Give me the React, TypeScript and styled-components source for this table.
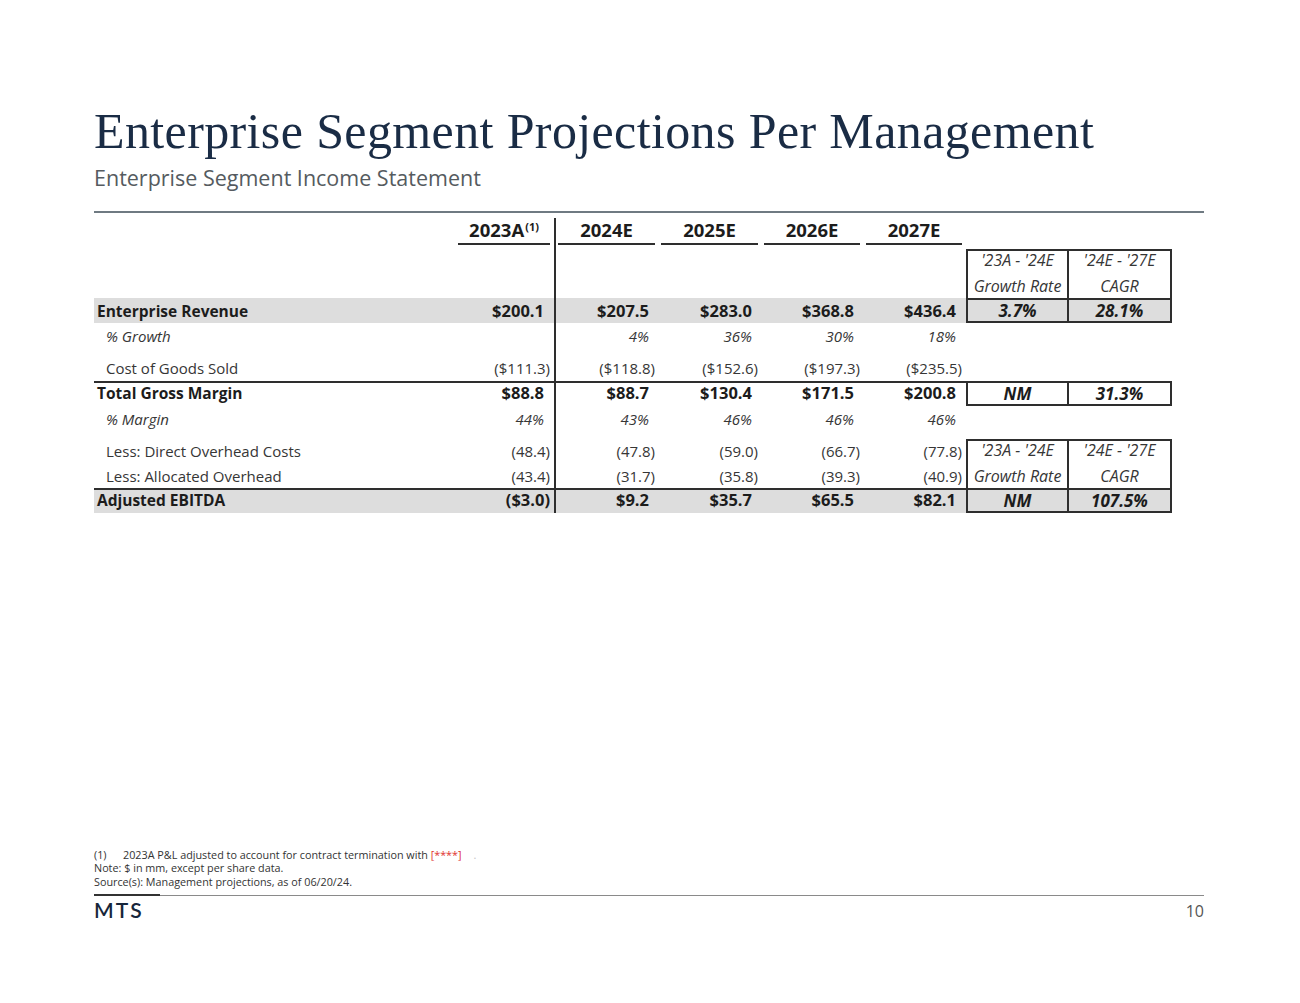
import React from 'react';
import styled, { createGlobalStyle, css } from 'styled-components';

const GlobalStyle = createGlobalStyle`
  html, body {
    margin: 0;
    padding: 0;
    background: #fff;
  }
  * {
    box-sizing: border-box;
  }
`;

const COLS = '362px 100px 103px 103px 102px 102px 103px 103px';
const LINE = '2px solid #2e2e2e';
const SHADE = '#dddddd';

const Page = styled.div`
  width: 1300px;
  height: 1003px;
  padding: 106px 96px 81px 94px;
  display: flex;
  flex-direction: column;
  font-family: 'Open Sans', 'Noto Sans', sans-serif;
  color: #333;
`;

const Title = styled.h1`
  margin: 0;
  font-family: 'Liberation Serif', 'Times New Roman', serif;
  font-weight: 400;
  font-size: 50px;
  line-height: 50px;
  letter-spacing: 0.38px;
  color: #1a2c45;
  white-space: nowrap;
`;

const Subtitle = styled.h2`
  margin: 10px 0 0;
  font-weight: 400;
  font-size: 21.5px;
  line-height: 24px;
  color: #555b60;
`;

const Rule = styled.div`
  margin-top: 21px;
  height: 2px;
  background: #6f7a82;
`;

const Table = styled.div`
  margin-top: 5px;
  display: flex;
  flex-direction: column;
`;

const Row = styled.div<{ $h: number }>`
  display: grid;
  grid-template-columns: ${COLS};
  grid-template-rows: ${(p) => p.$h}px;
  height: ${(p) => p.$h}px;
  font-size: 15px;
  line-height: 18px;
`;

const cellText = css<{ $kind: Kind; $shaded?: boolean; $rule?: boolean }>`
  display: flex;
  align-items: center;
  white-space: nowrap;
  font-weight: ${(p) => (p.$kind === 'bold' ? 700 : 400)};
  font-style: ${(p) => (p.$kind === 'italic' ? 'italic' : 'normal')};
  color: ${(p) => (p.$kind === 'bold' ? '#1c1c1c' : '#363636')};
  background: ${(p) => (p.$shaded ? SHADE : 'transparent')};
  border-top: ${(p) => (p.$rule ? LINE : 'none')};
  padding-bottom: ${(p) => (p.$rule ? 4 : 0)}px;
`;

const Label = styled.div<{ $kind: Kind; $shaded?: boolean; $rule?: boolean }>`
  ${cellText}
  padding-left: ${(p) => (p.$kind === 'bold' ? 3 : 12)}px;
  font-size: ${(p) => (p.$kind === 'bold' ? 15.5 : 15)}px;
`;

const Value = styled.div<{ $kind: Kind; $shaded?: boolean; $rule?: boolean; $split?: boolean }>`
  ${cellText}
  justify-content: flex-end;
  padding-right: 4px;
  font-size: ${(p) => (p.$kind === 'bold' ? 16.5 : 15)}px;
  border-right: ${(p) => (p.$split ? LINE : 'none')};
`;

const Paren = styled.span`
  display: inline-block;
  width: 6px;
`;

const HeadCell = styled.div<{ $split?: boolean }>`
  display: flex;
  align-items: stretch;
  border-right: ${(p) => (p.$split ? LINE : 'none')};
`;

const HeadText = styled.div`
  flex: 1;
  margin: 0 4px 0 2px;
  display: flex;
  align-items: center;
  justify-content: center;
  padding-bottom: 1px;
  border-bottom: ${LINE};
  font-size: 18.5px;
  font-weight: 700;
  color: #1c1c1c;
  sup {
    font-size: 11px;
    line-height: 0;
    position: relative;
    top: -3px;
    margin-left: 1px;
  }
`;

type BoxKind = 'top' | 'mid' | 'end' | 'single';

const BoxCell = styled.div<{ $kind: BoxKind; $first?: boolean }>`
  display: flex;
  align-items: center;
  justify-content: center;
  white-space: nowrap;
  font-style: italic;
  border-right: ${LINE};
  border-left: ${(p) => (p.$first ? LINE : 'none')};
  ${(p) =>
    p.$kind === 'top' &&
    css`
      border-top: ${LINE};
      padding-bottom: 4px;
    `}
  ${(p) =>
    (p.$kind === 'top' || p.$kind === 'mid') &&
    css`
      font-size: 16px;
      font-weight: 400;
      color: #363636;
    `}
  ${(p) =>
    (p.$kind === 'end' || p.$kind === 'single') &&
    css`
      border-top: ${LINE};
      border-bottom: ${LINE};
      font-size: 17px;
      font-weight: 700;
      color: #1c1c1c;
    `}
  background: ${(p) => (p.$kind === 'end' ? SHADE : 'transparent')};
`;

const Footnotes = styled.div`
  margin-top: auto;
  font-size: 10.8px;
  line-height: 13.5px;
  color: #333;
`;

const NoteNum = styled.span`
  display: inline-block;
  width: 29px;
`;

const Red = styled.span`
  color: #e0322f;
`;

const Faint = styled.span`
  margin-left: 12px;
  color: #c4c4c4;
`;

const FooterRule = styled.div`
  position: relative;
  margin-top: 7px;
  height: 1px;
  background: #8a8a8a;
  &::before {
    content: '';
    position: absolute;
    left: 0;
    top: -1px;
    width: 66px;
    height: 2px;
    background: #333;
  }
`;

const FooterRow = styled.div`
  display: flex;
  justify-content: space-between;
  align-items: center;
  height: 26px;
  padding-top: 1px;
`;

const Logo = styled.div`
  font-family: 'Lato', 'Inter', sans-serif;
  font-weight: 600;
  font-size: 21px;
  letter-spacing: 2px;
  color: #17263b;
`;

const PageNum = styled.div`
  font-size: 16px;
  color: #555;
  padding-top: 3px;
`;

type Kind = 'bold' | 'plain' | 'italic';

type Line = {
  h: number;
  label?: string;
  kind?: Kind;
  values?: string[];
  shaded?: boolean;
  rule?: boolean;
  box?: { kind: BoxKind; a: string; b: string };
};

const lines: Line[] = [
  { h: 4 },
  { h: 24, box: { kind: 'top', a: "'23A - '24E", b: "'24E - '27E" } },
  { h: 25, box: { kind: 'mid', a: 'Growth Rate', b: 'CAGR' } },
  {
    h: 25,
    label: 'Enterprise Revenue',
    kind: 'bold',
    shaded: true,
    values: ['$200.1', '$207.5', '$283.0', '$368.8', '$436.4'],
    box: { kind: 'end', a: '3.7%', b: '28.1%' },
  },
  { h: 26, label: '% Growth', kind: 'italic', values: ['', '4%', '36%', '30%', '18%'] },
  { h: 6 },
  {
    h: 26,
    label: 'Cost of Goods Sold',
    kind: 'plain',
    values: ['($111.3)', '($118.8)', '($152.6)', '($197.3)', '($235.5)'],
  },
  {
    h: 25,
    label: 'Total Gross Margin',
    kind: 'bold',
    rule: true,
    values: ['$88.8', '$88.7', '$130.4', '$171.5', '$200.8'],
    box: { kind: 'single', a: 'NM', b: '31.3%' },
  },
  { h: 25, label: '% Margin', kind: 'italic', values: ['44%', '43%', '46%', '46%', '46%'] },
  { h: 8 },
  {
    h: 24,
    label: 'Less: Direct Overhead Costs',
    kind: 'plain',
    values: ['(48.4)', '(47.8)', '(59.0)', '(66.7)', '(77.8)'],
    box: { kind: 'top', a: "'23A - '24E", b: "'24E - '27E" },
  },
  {
    h: 25,
    label: 'Less: Allocated Overhead',
    kind: 'plain',
    values: ['(43.4)', '(31.7)', '(35.8)', '(39.3)', '(40.9)'],
    box: { kind: 'mid', a: 'Growth Rate', b: 'CAGR' },
  },
  {
    h: 25,
    label: 'Adjusted EBITDA',
    kind: 'bold',
    shaded: true,
    rule: true,
    values: ['($3.0)', '$9.2', '$35.7', '$65.5', '$82.1'],
    box: { kind: 'end', a: 'NM', b: '107.5%' },
  },
];

const years = ['2024E', '2025E', '2026E', '2027E'];

const Num = ({ v }: { v: string }) => (
  <>
    {v}
    {v && !v.endsWith(')') && <Paren />}
  </>
);

const TableRow = ({ line }: { line: Line }) => {
  const kind = line.kind ?? 'plain';
  const values = line.values ?? ['', '', '', '', ''];
  return (
    <Row $h={line.h}>
      <Label $kind={kind} $shaded={line.shaded} $rule={line.rule}>
        {line.label}
      </Label>
      {values.map((v, i) => (
        <Value key={i} $kind={kind} $shaded={line.shaded} $rule={line.rule} $split={i === 0}>
          <Num v={v} />
        </Value>
      ))}
      {line.box ? (
        <>
          <BoxCell $kind={line.box.kind} $first>
            {line.box.a}
          </BoxCell>
          <BoxCell $kind={line.box.kind}>{line.box.b}</BoxCell>
        </>
      ) : (
        <>
          <div />
          <div />
        </>
      )}
    </Row>
  );
};

const App = () => {
  return (
    <>
      <GlobalStyle />
      <Page>
        <Title>Enterprise Segment Projections Per Management</Title>
        <Subtitle>Enterprise Segment Income Statement</Subtitle>
        <Rule />
        <Table>
          <Row $h={27}>
            <div />
            <HeadCell $split>
              <HeadText>
                2023A<sup>(1)</sup>
              </HeadText>
            </HeadCell>
            {years.map((y) => (
              <HeadCell key={y}>
                <HeadText>{y}</HeadText>
              </HeadCell>
            ))}
            <div />
            <div />
          </Row>
          {lines.map((line, i) => (
            <TableRow key={i} line={line} />
          ))}
        </Table>
        <Footnotes>
          <div>
            <NoteNum>(1)</NoteNum>2023A P&amp;L adjusted to account for contract termination with{' '}
            <Red>[****]</Red>
            <Faint>.</Faint>
          </div>
          <div>Note: $ in mm, except per share data.</div>
          <div>Source(s): Management projections, as of 06/20/24.</div>
        </Footnotes>
        <FooterRule />
        <FooterRow>
          <Logo>MTS</Logo>
          <PageNum>10</PageNum>
        </FooterRow>
      </Page>
    </>
  );
};

export default App;
